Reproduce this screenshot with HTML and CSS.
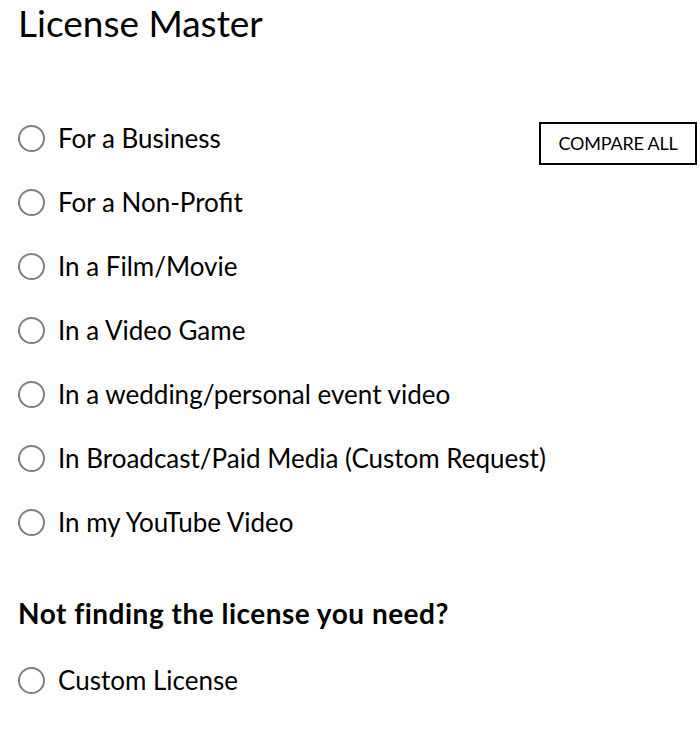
FILE: index.html
```html
<!DOCTYPE html>
<html>
<head>
<meta charset="utf-8">
<link rel="stylesheet" href="styles.css">
</head>
<body>
<div class="page">
  <h1 class="title">License Master</h1>
  <div class="options">
    <div class="row first">
      <label class="opt"><span class="radio"></span><span class="label">For a Business</span></label>
      <button class="compare">COMPARE ALL</button>
    </div>
    <div class="row"><label class="opt"><span class="radio"></span><span class="label">For a Non-Profit</span></label></div>
    <div class="row"><label class="opt"><span class="radio"></span><span class="label">In a Film/Movie</span></label></div>
    <div class="row"><label class="opt"><span class="radio"></span><span class="label">In a Video Game</span></label></div>
    <div class="row"><label class="opt"><span class="radio"></span><span class="label">In a wedding/personal event video</span></label></div>
    <div class="row"><label class="opt"><span class="radio"></span><span class="label">In Broadcast/Paid Media (Custom Request)</span></label></div>
    <div class="row"><label class="opt"><span class="radio"></span><span class="label">In my YouTube Video</span></label></div>
  </div>
  <h2 class="subtitle">Not finding the license you need?</h2>
  <div class="row"><label class="opt"><span class="radio"></span><span class="label">Custom License</span></label></div>
</div>
</body>
</html>
```
FILE: styles.css
```css
html, body {
  margin: 0;
  padding: 0;
  background: #fff;
}
body {
  font-family: "Lato", "Open Sans", sans-serif;
  color: #000;
}
.page {
  padding: 0 3px 0 18px;
}
.title {
  font-size: 37px;
  font-weight: 400;
  margin: 0;
  line-height: 45px;
}
.options {
  margin-top: 61px;
}
.row {
  display: flex;
  align-items: center;
  justify-content: space-between;
  height: 64px;
}
.opt {
  display: flex;
  align-items: center;
  gap: 13px;
}
.radio {
  width: 23px;
  height: 23px;
  border: 2px solid #7f7f7f;
  border-radius: 50%;
  box-sizing: content-box;
  flex: none;
}
.label {
  font-size: 26px;
  line-height: 30px;
}
.compare {
  font-family: inherit;
  font-size: 18px;
  letter-spacing: -0.2px;
  background: #fff;
  border: 2px solid #000;
  padding: 0;
  height: 43px;
  width: 158px;
  color: #000;
  margin-top: 10px;
}
.subtitle {
  font-size: 28px;
  font-weight: 700;
  letter-spacing: 0.5px;
  margin: 43px 0 0 0;
  line-height: 32px;
}
.subtitle + .row {
  margin-top: 19px;
}
```
